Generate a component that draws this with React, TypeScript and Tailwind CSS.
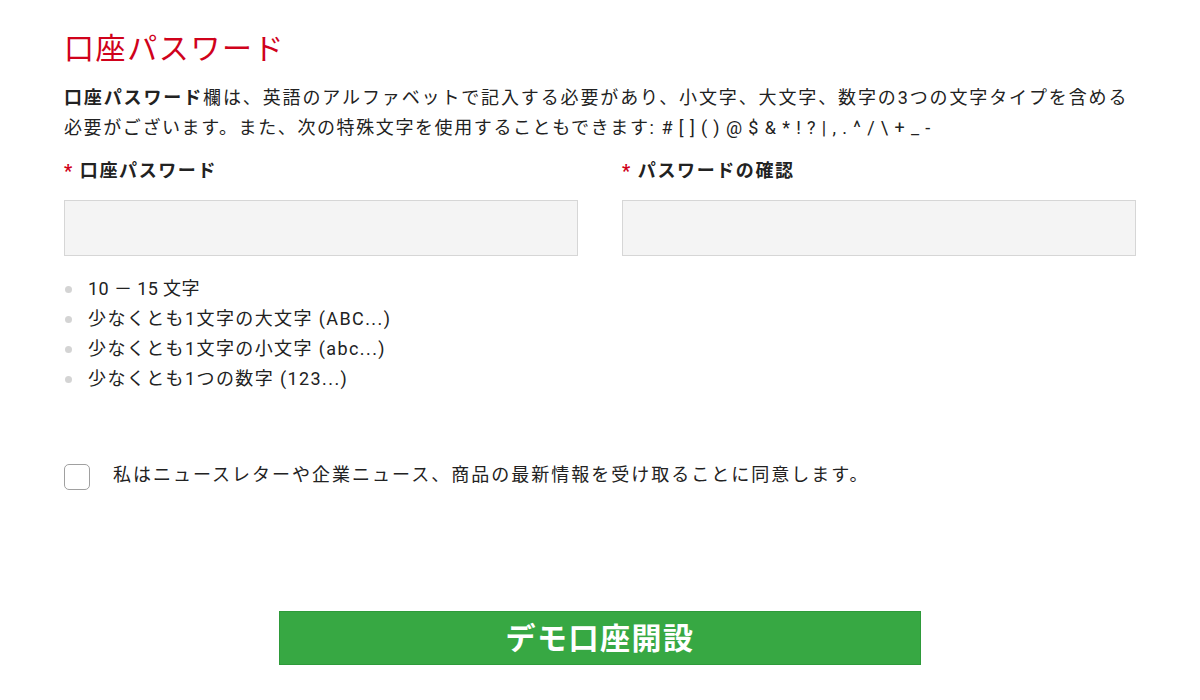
import { useState } from 'react';

const requirements = [
  { text: '10 － 15 文字', tight: true },
  { text: '少なくとも1文字の大文字 (ABC...)', tight: false },
  { text: '少なくとも1文字の小文字 (abc...)', tight: false },
  { text: '少なくとも1つの数字 (123...)', tight: false },
];

export default function App() {
  const [agree, setAgree] = useState(false);

  return (
    <div className="min-h-[700px] bg-white font-['Roboto','Noto_Sans_CJK_JP',sans-serif] text-[#222]">
      <div className="px-16 pt-[29px]">
        {/* 見出し */}
        <h1 className="text-[30px] leading-[40px] tracking-[1.6px] text-[#d0021b]">口座パスワード</h1>

        <p className="mt-[14px] mr-[8px] text-[18px] leading-[30px] tracking-[1.6px] text-justify">
          <span className="font-bold">口座パスワード</span>
          欄は、英語のアルファベットで記入する必要があり、小文字、大文字、数字の3つの文字タイプを含める必要がございます。また、次の特殊文字を使用することもできます:{' '}
          <span className="tracking-[0.9px]"># [ ] ( ) @ $ & * ! ? | , . ^ / \ + _ -</span>
        </p>

        {/* 入力欄 */}
        <div className="mt-[13px] grid grid-cols-2 gap-[44px]">
          <div>
            <label className="block text-[18px] leading-[30px] tracking-[1.6px] font-bold">
              <span className="text-[#d0021b]">*</span> 口座パスワード
            </label>
            <input
              type="password"
              className="mt-[14px] block h-[56px] w-full border border-[#d6d6d6] bg-[#f4f4f4] px-3 outline-none"
            />
            <ul className="mt-[18px]">
              {requirements.map((r) => (
                <li
                  key={r.text}
                  className={`flex items-center text-[18px] leading-[30px] ${r.tight ? 'tracking-[0.4px]' : 'tracking-[1.4px]'}`}
                >
                  <span className="ml-[1px] mr-[16px] h-[7px] w-[7px] rounded-full bg-[#d4d4d4]" />
                  {r.text}
                </li>
              ))}
            </ul>
          </div>
          <div>
            <label className="block text-[18px] leading-[30px] tracking-[1.6px] font-bold">
              <span className="text-[#d0021b]">*</span> パスワードの確認
            </label>
            <input
              type="password"
              className="mt-[14px] block h-[56px] w-full border border-[#d6d6d6] bg-[#f4f4f4] px-3 outline-none"
            />
          </div>
        </div>

        {/* 同意チェック */}
        <label className="mt-[66px] flex items-start gap-[23px] cursor-pointer">
          <input
            type="checkbox"
            checked={agree}
            onChange={(e) => setAgree(e.target.checked)}
            className="mt-[4px] h-[26px] w-[26px] shrink-0 appearance-none rounded-[5px] border border-[#a0a0a0] bg-white"
          />
          <span className="text-[18px] leading-[30px] tracking-[2px]">
            私はニュースレターや企業ニュース、商品の最新情報を受け取ることに同意します。
          </span>
        </label>

        {/* 送信ボタン */}
        <div className="mt-[121px] flex justify-center">
          <button className="h-[54px] w-[642px] border border-[#2e9a3a] bg-[#37a843] text-[30px] font-bold tracking-[1.5px] text-white">
            デモ口座開設
          </button>
        </div>
      </div>
    </div>
  );
}
